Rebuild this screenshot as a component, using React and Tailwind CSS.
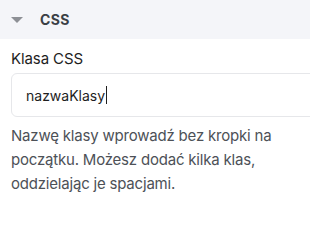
import React from 'react'

export default function App() {
  return (
    <div className="w-[310px] h-[222px] overflow-hidden bg-white font-['Inter','Liberation_Sans',sans-serif]">
      {/* panel header */}
      <div className="h-[39px] bg-[#f4f5f9] flex items-center px-[11px]">
        <svg width="12" height="6" viewBox="0 0 12 6" className="mt-[1px]">
          <path d="M0 0 L12 0 L6 6 Z" fill="#8d9096" />
        </svg>
        <span className="ml-[17px] text-[14px] font-bold text-[#3a3f45] tracking-[0.4px]">
          CSS
        </span>
      </div>

      {/* body */}
      <div className="px-[11px]">
        <label className="block mt-[10px] text-[15px] leading-[20px] text-[#1e1e1e] tracking-[-0.1px]">
          Klasa CSS
        </label>
        <div className="mt-[4px] w-[330px] h-[44px] border border-[#e6e7ea] rounded-[6px] flex items-center pl-[14px]">
          <span className="text-[14px] text-[#1e1e1e]">nazwaKlasy</span>
          <span className="w-[1px] h-[18px] bg-[#1e1e1e] ml-[1px]" />
        </div>
        <p className="mt-[7px] text-[15px] leading-[24px] text-[#4d5157] tracking-[-0.2px] pr-[8px]">
          Nazwę klasy wprowadź bez kropki na początku. Możesz dodać kilka klas,
          oddzielając je spacjami.
        </p>
      </div>
    </div>
  )
}
